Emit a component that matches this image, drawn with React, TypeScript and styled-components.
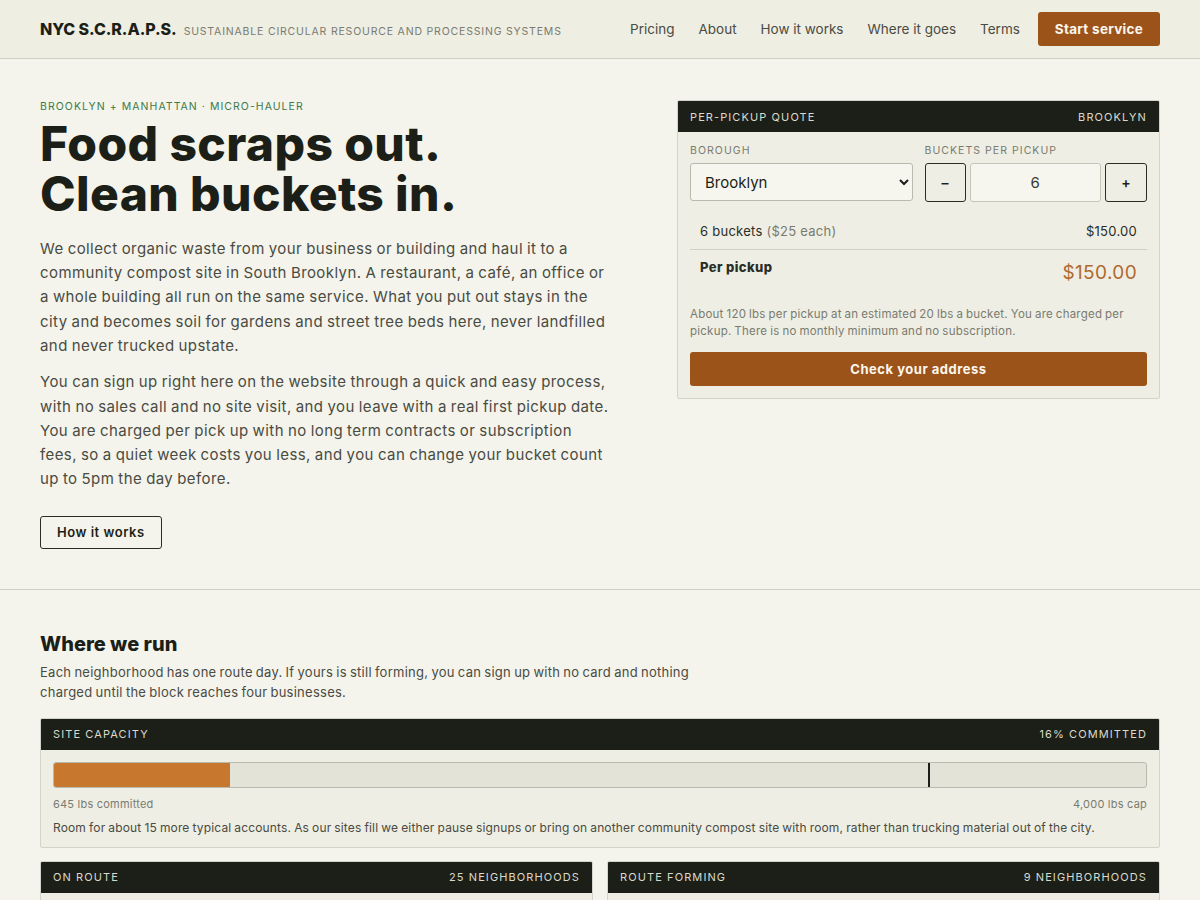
import React, { useState } from "react";
import styled, { createGlobalStyle } from "styled-components";

const GlobalStyle = createGlobalStyle`
  * { box-sizing: border-box; }
  html, body { margin: 0; padding: 0; }
  body {
    background: #f4f4ec;
    font-family: Inter, "Open Sans", "Liberation Sans", sans-serif;
    color: #1c1f17;
  }
`;

const Header = styled.header`
  height: 59px;
  background: #eeeee3;
  border-bottom: 1px solid #cfd0c4;
  display: flex;
  align-items: center;
  justify-content: space-between;
  padding: 0 40px;
`;

const Brand = styled.div`
  display: flex;
  align-items: baseline;
  gap: 7px;
`;

const Logo = styled.span`
  font-size: 16px;
  font-weight: 800;
  letter-spacing: -0.005em;
  color: #1c1f17;
`;

const Tagline = styled.span`
  font-size: 10.5px;
  letter-spacing: 0.078em;
  text-transform: uppercase;
  color: #7a7b70;
`;

const Nav = styled.nav`
  display: flex;
  align-items: center;
  gap: 24px;
`;

const NavLink = styled.a`
  font-size: 13.5px;
  color: #4a4b42;
  text-decoration: none;
  letter-spacing: 0;
`;

const PrimaryButton = styled.button<{ $full?: boolean }>`
  background: #9c5319;
  color: #fbf6ee;
  border: none;
  border-radius: 3px;
  font-family: inherit;
  font-weight: 700;
  font-size: ${(p) => (p.$full ? "13px" : "13.5px")};
  letter-spacing: ${(p) => (p.$full ? "0.04em" : "0.02em")};
  height: 34px;
  padding: 0 17px;
  margin-left: ${(p) => (p.$full ? "0" : "-6px")};
  width: ${(p) => (p.$full ? "100%" : "auto")};
  cursor: pointer;
`;

const Hero = styled.section`
  display: grid;
  grid-template-columns: 570px 483px;
  justify-content: space-between;
  padding: 41px 40px 40px;
  border-bottom: 1px solid #cfd0c4;
`;

const Eyebrow = styled.div`
  font-size: 10.5px;
  letter-spacing: 0.1em;
  text-transform: uppercase;
  color: #3d7a4a;
  margin-bottom: 6px;
`;

const H1 = styled.h1`
  font-size: 48px;
  line-height: 1.04;
  font-weight: 800;
  letter-spacing: 0.008em;
  margin: 0 0 18px;
  color: #1c1f17;
`;

const Para = styled.p`
  font-size: 15px;
  line-height: 24.3px;
  color: #4a4b42;
  margin: 0 0 12px;
  letter-spacing: 0.028em;
  word-spacing: -0.04em;
`;

const OutlineButton = styled.button`
  margin-top: 12px;
  background: transparent;
  border: 1px solid #2a2d24;
  border-radius: 3px;
  height: 33px;
  padding: 0 16px;
  font-family: inherit;
  font-size: 13px;
  font-weight: 600;
  letter-spacing: 0.04em;
  color: #1c1f17;
`;

const Card = styled.div`
  background: #eeeee4;
  border: 1px solid #d3d4c8;
  border-radius: 2px;
  overflow: hidden;
  align-self: start;
`;

const CardHead = styled.div`
  height: 31px;
  background: #1c1f17;
  color: #d9dacd;
  display: flex;
  align-items: center;
  justify-content: space-between;
  padding: 0 12px;
  font-size: 11px;
  font-weight: 400;
  letter-spacing: 0.1em;
  text-transform: uppercase;
`;

const CardBody = styled.div`
  padding: 12px 12px 12px;
`;

const FieldRow = styled.div`
  display: grid;
  grid-template-columns: 1fr 1fr;
  gap: 12px;
`;

const Field = styled.div`
  display: flex;
  flex-direction: column;
  gap: 6px;
`;

const Label = styled.label`
  font-size: 10.5px;
  letter-spacing: 0.1em;
  text-transform: uppercase;
  color: #7a7b70;
`;

const Select = styled.select`
  height: 38px;
  border: 1px solid #b9baae;
  border-radius: 3px;
  background: #f6f6ee;
  font-family: inherit;
  font-size: 15px;
  color: #1c1f17;
  padding: 0 10px;
`;

const Stepper = styled.div`
  display: grid;
  grid-template-columns: 41px 1fr 42px;
  gap: 4px;
  height: 39px;
`;

const StepButton = styled.button`
  border: 1px solid #2a2d24;
  border-radius: 3px;
  background: #eeeee4;
  font-family: inherit;
  font-size: 14px;
  font-weight: 600;
  color: #1c1f17;
`;

const NumberBox = styled.div`
  border: 1px solid #c5c6ba;
  border-radius: 3px;
  background: #f6f6ee;
  display: flex;
  align-items: center;
  justify-content: center;
  font-size: 15px;
  color: #3a3b33;
`;

const Lines = styled.div`
  margin-top: 12px;
`;

const Line = styled.div<{ $total?: boolean }>`
  display: flex;
  justify-content: space-between;
  align-items: ${(p) => (p.$total ? "flex-start" : "center")};
  padding: ${(p) => (p.$total ? "9px 10px 12px" : "9px 10px 10px")};
  border-top: ${(p) => (p.$total ? "1px solid #cfd0c4" : "none")};
  font-size: 13px;
  letter-spacing: 0.02em;
  color: #2a2d24;
`;

const Muted = styled.span`
  color: #7a7b70;
`;

const Strong = styled.span`
  font-weight: 800;
  letter-spacing: 0.03em;
`;

const Big = styled.span`
  font-size: 19px;
  color: #b06a2e;
  margin-top: 2px;
  letter-spacing: 0.02em;
`;

const Note = styled.p`
  font-size: 11.5px;
  line-height: 17px;
  color: #7a7b70;
  margin: 10px 0 12px;
  letter-spacing: 0.02em;
  word-spacing: -0.05em;
`;

const Section = styled.section`
  padding: 42px 40px 40px;
`;

const H2 = styled.h2`
  font-size: 20px;
  font-weight: 800;
  letter-spacing: 0;
  margin: 0 0 6px;
`;

const SubPara = styled.p`
  font-size: 13px;
  line-height: 20px;
  color: #4a4b42;
  max-width: 680px;
  margin: 0 0 16px;
  letter-spacing: 0.02em;
  word-spacing: -0.06em;
`;

const Bar = styled.div`
  position: relative;
  height: 26px;
  border: 1px solid #b9baae;
  border-radius: 3px;
  background: #e3e4d7;
  overflow: hidden;
`;

const Fill = styled.div`
  height: 100%;
  background: #c8782e;
`;

const Marker = styled.div`
  position: absolute;
  top: 0;
  bottom: 0;
  width: 2px;
  background: #1c1f17;
`;

const BarLabels = styled.div`
  display: flex;
  justify-content: space-between;
  font-size: 11px;
  letter-spacing: 0.02em;
  color: #7a7b70;
  margin-top: 9px;
`;

const SmallText = styled.p`
  font-size: 12px;
  color: #4a4b42;
  margin: 9px 0 0;
  letter-spacing: 0.012em;
  word-spacing: -0.04em;
`;

const TwoCol = styled.div`
  display: grid;
  grid-template-columns: 1fr 1fr;
  gap: 14px;
  margin-top: 13px;
`;

const EmptyBody = styled.div`
  height: 60px;
`;

export default function App() {
  const [count, setCount] = useState(6);
  const price = count * 25;
  const committed = 645;
  const cap = 4000;
  return (
    <>
      <GlobalStyle />
      <Header>
        <Brand>
          <Logo>NYC S.C.R.A.P.S.</Logo>
          <Tagline>Sustainable Circular Resource and Processing Systems</Tagline>
        </Brand>
        <Nav>
          <NavLink href="#">Pricing</NavLink>
          <NavLink href="#">About</NavLink>
          <NavLink href="#">How it works</NavLink>
          <NavLink href="#">Where it goes</NavLink>
          <NavLink href="#">Terms</NavLink>
          <PrimaryButton>Start service</PrimaryButton>
        </Nav>
      </Header>

      <Hero>
        <div>
          <Eyebrow>Brooklyn + Manhattan · Micro-hauler</Eyebrow>
          <H1>
            Food scraps out.
            <br />
            Clean buckets in.
          </H1>
          <Para>
            We collect organic waste from your business or building and haul it to a community compost site in South
            Brooklyn. A restaurant, a café, an office or a whole building all run on the same service. What you put out
            stays in the city and becomes soil for gardens and street tree beds here, never landfilled and never trucked
            upstate.
          </Para>
          <Para>
            You can sign up right here on the website through a quick and easy process, with no sales call and no site
            visit, and you leave with a real first pickup date. You are charged per pick up with no long term contracts
            or subscription fees, so a quiet week costs you less, and you can change your bucket count up to 5pm the day
            before.
          </Para>
          <OutlineButton>How it works</OutlineButton>
        </div>

        <Card>
          <CardHead>
            <span>Per-pickup quote</span>
            <span>Brooklyn</span>
          </CardHead>
          <CardBody>
            <FieldRow>
              <Field>
                <Label>Borough</Label>
                <Select defaultValue="Brooklyn">
                  <option>Brooklyn</option>
                  <option>Manhattan</option>
                </Select>
              </Field>
              <Field>
                <Label>Buckets per pickup</Label>
                <Stepper>
                  <StepButton onClick={() => setCount((c) => Math.max(1, c - 1))}>–</StepButton>
                  <NumberBox>{count}</NumberBox>
                  <StepButton onClick={() => setCount((c) => c + 1)}>+</StepButton>
                </Stepper>
              </Field>
            </FieldRow>
            <Lines>
              <Line>
                <span>
                  {count} buckets <Muted>($25 each)</Muted>
                </span>
                <span>${price.toFixed(2)}</span>
              </Line>
              <Line $total>
                <Strong>Per pickup</Strong>
                <Big>${price.toFixed(2)}</Big>
              </Line>
            </Lines>
            <Note>
              About {count * 20} lbs per pickup at an estimated 20 lbs a bucket. You are charged per pickup. There is no
              monthly minimum and no subscription.
            </Note>
            <PrimaryButton $full>Check your address</PrimaryButton>
          </CardBody>
        </Card>
      </Hero>

      <Section>
        <H2>Where we run</H2>
        <SubPara>
          Each neighborhood has one route day. If yours is still forming, you can sign up with no card and nothing
          charged until the block reaches four businesses.
        </SubPara>
        <Card>
          <CardHead>
            <span>Site capacity</span>
            <span>{Math.round((committed / cap) * 100)}% committed</span>
          </CardHead>
          <CardBody>
            <Bar>
              <Fill style={{ width: `${(committed / cap) * 100}%` }} />
              <Marker style={{ left: "80%" }} />
            </Bar>
            <BarLabels>
              <span>645 lbs committed</span>
              <span>4,000 lbs cap</span>
            </BarLabels>
            <SmallText>
              Room for about 15 more typical accounts. As our sites fill we either pause signups or bring on another
              community compost site with room, rather than trucking material out of the city.
            </SmallText>
          </CardBody>
        </Card>
        <TwoCol>
          <Card>
            <CardHead>
              <span>On route</span>
              <span>25 neighborhoods</span>
            </CardHead>
            <EmptyBody />
          </Card>
          <Card>
            <CardHead>
              <span>Route forming</span>
              <span>9 neighborhoods</span>
            </CardHead>
            <EmptyBody />
          </Card>
        </TwoCol>
      </Section>
    </>
  );
}
